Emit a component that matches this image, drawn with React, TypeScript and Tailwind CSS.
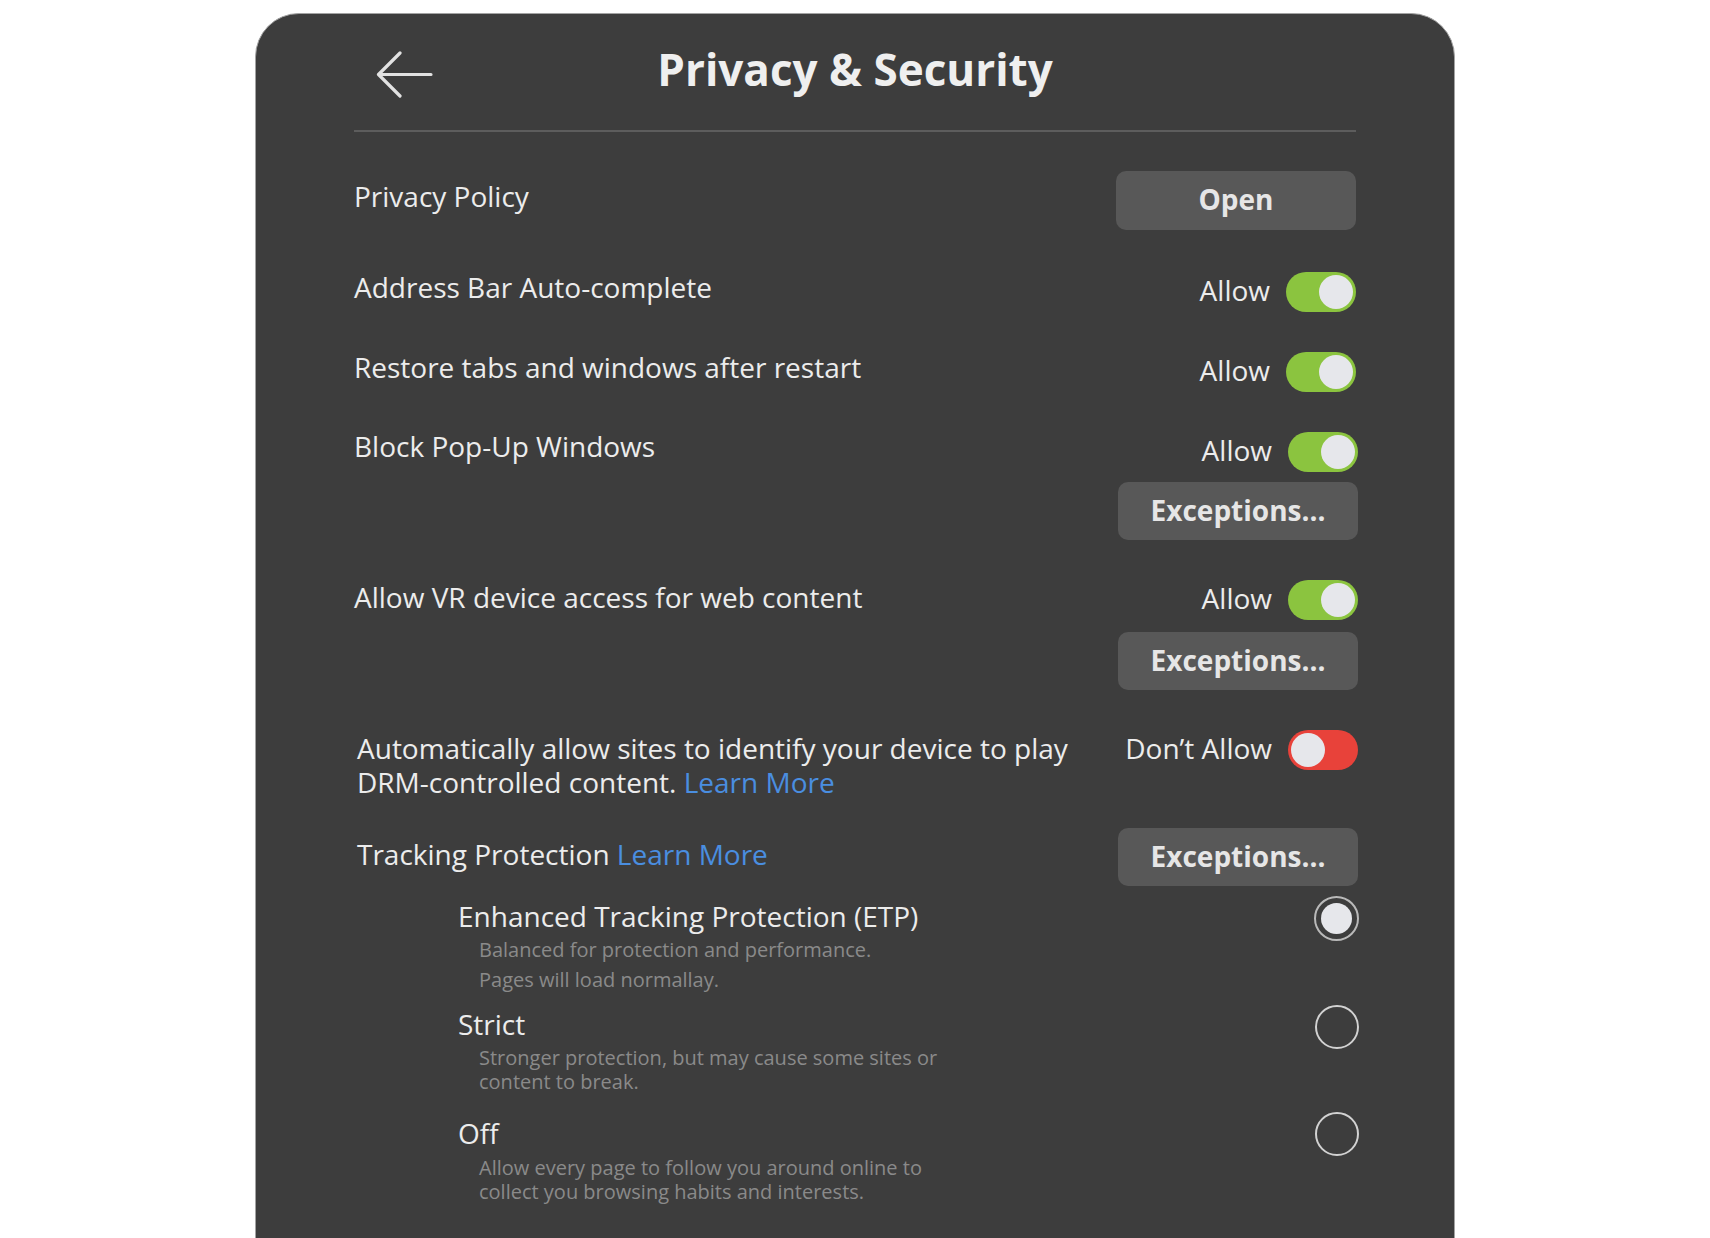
const font = { fontFamily: '"Open Sans", "Noto Sans", sans-serif' };

function Toggle({ on }: { on: boolean }) {
  return (
    <div
      className={
        on
          ? "flex h-[40px] w-[70px] items-center justify-end rounded-full bg-[#8bc43f] px-[3px]"
          : "flex h-[40px] w-[70px] items-center justify-start rounded-full bg-[#e8423a] px-[3px]"
      }
    >
      <div className="h-[34px] w-[34px] rounded-full bg-[#e6e7eb]" />
    </div>
  );
}

function ToggleRow({ label, on }: { label: string; on: boolean }) {
  return (
    <div className="flex h-[40px] items-center gap-4">
      <span className="mb-[5px] text-[28px] leading-[38px] text-[#ececec]">{label}</span>
      <Toggle on={on} />
    </div>
  );
}

function GrayButton({ children, tall }: { children: React.ReactNode; tall?: boolean }) {
  return (
    <button
      className={
        (tall ? "h-[59px] " : "h-[58px] ") +
        "flex w-[240px] items-center justify-center rounded-[10px] bg-[#585858] pb-[3px] text-[28px] font-bold text-[#e6e6e6]"
      }
    >
      {children}
    </button>
  );
}

function Radio({ selected }: { selected?: boolean }) {
  if (selected) {
    return (
      <div className="flex h-[45px] w-[45px] shrink-0 items-center justify-center rounded-full border-[2.5px] border-[#b9b9b9]">
        <div className="h-[31px] w-[31px] rounded-full bg-[#e6e7eb]" />
      </div>
    );
  }
  return <div className="h-[44px] w-[44px] shrink-0 rounded-full border-2 border-[#d2d2d2]" />;
}

export default function App() {
  return (
    <div className="min-h-screen bg-white pt-[13px]" style={font}>
      <div className="mx-auto min-h-[1300px] w-[1200px] rounded-t-[44px] border border-[#a3a3a3] bg-[#3d3d3d] px-[98px] pb-[60px]">
        {/* header */}
        <div className="grid h-[118px] grid-cols-[1fr_auto_1fr] items-center border-b-2 border-[#5d5d5d]">
          <div className="mt-[4px] pl-[22px]">
            <svg width="57" height="47" viewBox="0 0 57 47" fill="none">
              <path
                d="M55 23.5H3M24 2L2.5 23.5L24 45"
                stroke="#e2e2e2"
                strokeWidth="3.2"
                strokeLinecap="round"
                strokeLinejoin="round"
              />
            </svg>
          </div>
          <h1 className="mb-[6px] text-[44px] font-bold text-[#efefef]">Privacy &amp; Security</h1>
          <div />
        </div>

        {/* privacy policy */}
        <div className="mt-[39px] flex items-start justify-between">
          <span className="mt-[6px] text-[28px] leading-[38px] text-[#ececec]">Privacy Policy</span>
          <GrayButton tall>Open</GrayButton>
        </div>

        <div className="mt-[38px] flex items-start justify-between">
          <span className="text-[28px] leading-[38px] text-[#ececec]">Address Bar Auto-complete</span>
          <div className="mt-[4px]">
            <ToggleRow label="Allow" on />
          </div>
        </div>

        <div className="mt-[36px] flex items-start justify-between">
          <span className="text-[28px] leading-[38px] text-[#ececec]">Restore tabs and windows after restart</span>
          <div className="mt-[4px]">
            <ToggleRow label="Allow" on />
          </div>
        </div>

        <div className="mt-[35px] -mr-[2px] flex items-start justify-between">
          <span className="text-[28px] leading-[38px] text-[#ececec]">Block Pop-Up Windows</span>
          <div className="mt-[5px] flex flex-col items-end gap-[10px]">
            <ToggleRow label="Allow" on />
            <GrayButton>Exceptions...</GrayButton>
          </div>
        </div>

        <div className="mt-[38px] -mr-[2px] flex items-start justify-between">
          <span className="text-[28px] leading-[38px] text-[#ececec]">Allow VR device access for web content</span>
          <div className="mt-[2px] flex flex-col items-end gap-[12px]">
            <ToggleRow label="Allow" on />
            <GrayButton>Exceptions...</GrayButton>
          </div>
        </div>

        <div className="mt-[40px] -mr-[2px] flex items-start justify-between">
          <p className="ml-[3px] mt-[1px] text-[28px] leading-[34px] text-[#ececec]">
            Automatically allow sites to identify your device to play
            <br />
            DRM-controlled content. <span className="text-[#4a8ee0]">Learn More</span>
          </p>
          <ToggleRow label="Don’t Allow" on={false} />
        </div>

        <div className="mt-[29px] -mr-[2px] flex items-start justify-between">
          <span className="ml-[3px] mt-[7px] text-[28px] leading-[38px] text-[#ececec]">
            Tracking Protection <span className="text-[#4a8ee0]">Learn More</span>
          </span>
          <GrayButton>Exceptions...</GrayButton>
        </div>

        {/* tracking options */}
        <div className="-mr-[3px] pl-[104px]">
          <div className="mt-[10px] flex items-start justify-between">
            <div>
              <div className="mt-[1px] text-[28px] leading-[38px] text-[#ececec]">
                Enhanced Tracking Protection (ETP)
              </div>
              <div className="pl-[21px] text-[20px] leading-[30px] text-[#8a8a8a]">
                <p>Balanced for protection and performance.</p>
                <p>Pages will load normallay.</p>
              </div>
            </div>
            <Radio selected />
          </div>

          <div className="mt-[10px] flex items-start justify-between">
            <div>
              <div className="text-[28px] leading-[38px] text-[#ececec]">Strict</div>
              <p className="mt-[3px] pl-[21px] text-[20px] leading-[24px] text-[#8a8a8a]">
                Stronger protection, but may cause some sites or
                <br />
                content to break.
              </p>
            </div>
            <Radio />
          </div>

          <div className="mt-[18px] flex items-start justify-between">
            <div>
              <div className="mt-[2px] text-[28px] leading-[38px] text-[#ececec]">Off</div>
              <p className="mt-[4px] pl-[21px] text-[20px] leading-[24px] text-[#8a8a8a]">
                Allow every page to follow you around online to
                <br />
                collect you browsing habits and interests.
              </p>
            </div>
            <Radio />
          </div>
        </div>
      </div>
    </div>
  );
}
